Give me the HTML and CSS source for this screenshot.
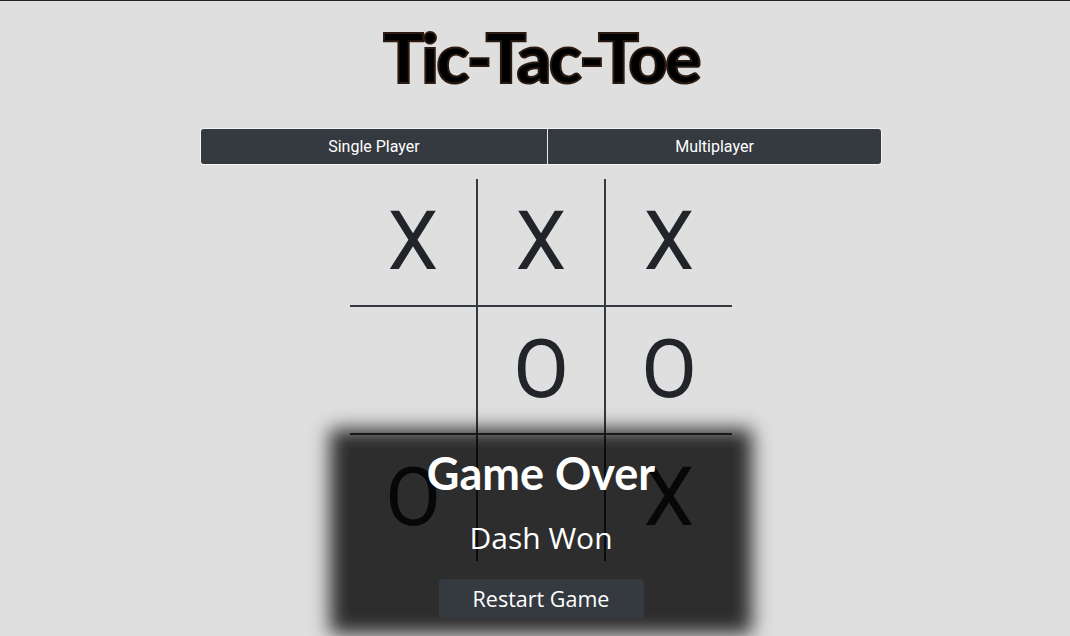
FILE: index.html
```html
<!DOCTYPE html>
<html>
<head>
<meta charset="utf-8">
<link rel="stylesheet" href="styles.css">
</head>
<body>
<div class="page">
  <h1 class="title">Tic-Tac-Toe</h1>
  <div class="modes">
    <button class="mode">Single Player</button>
    <button class="mode">Multiplayer</button>
  </div>
  <div class="board">
    <div class="cell">X</div>
    <div class="cell">X</div>
    <div class="cell">X</div>
    <div class="cell"></div>
    <div class="cell">O</div>
    <div class="cell">O</div>
    <div class="cell">O</div>
    <div class="cell"></div>
    <div class="cell">X</div>
    <div class="overlay">
      <h2 class="over-title">Game Over</h2>
      <p class="over-msg">Dash Won</p>
      <button class="restart">Restart Game</button>
    </div>
  </div>
</div>
</body>
</html>
```

FILE: styles.css
```css
html {
  border-top: 1px solid #222;
  background: #dfdfdf;
}
body {
  margin: 0;
  background: #dfdfdf;
  height: 635px;
  overflow: hidden;
}
.page {
  padding-left: 12px;
  display: flex;
  flex-direction: column;
  align-items: center;
}
.title {
  margin: 15px 0 0 0;
  font-family: "Lato", sans-serif;
  font-weight: 900;
  font-size: 68px;
  line-height: 1.2;
  color: #000;
  -webkit-text-stroke: 2px #2a1a10;
  letter-spacing: -2.5px;
}
.modes {
  margin-top: 30px;
  width: 682px;
  height: 37px;
  display: flex;
  border: 1px solid #f4f4f4;
  border-radius: 4px;
  overflow: hidden;
  box-sizing: border-box;
}
.mode {
  flex: 1 1 auto;
  margin: 0;
  border: 0;
  background: #343a40;
  color: #fff;
  font-family: "Roboto", sans-serif;
  font-size: 16px;
  padding: 0;
}
.mode + .mode {
  border-left: 1px solid #e8e8e8;
}
.board {
  position: relative;
  margin-top: 14px;
  display: grid;
  grid-template-columns: 128px 128px 126px;
  grid-template-rows: 128px 128px 126px;
}
.cell {
  display: flex;
  align-items: center;
  justify-content: center;
  font-family: "Roboto", sans-serif;
  font-size: 81px;
  font-weight: 400;
  color: #212529;
  box-sizing: border-box;
  border-color: #343a40;
  border-style: solid;
  border-width: 0;
}
.cell:nth-child(3n+1), .cell:nth-child(3n+2) {
  border-right-width: 2px;
}
.cell:nth-child(-n+6) {
  border-bottom-width: 2px;
}
.overlay {
  position: absolute;
  left: 0;
  top: 270px;
  width: 382px;
  height: 165px;
  background: rgba(0, 0, 0, 0.8);
  box-shadow: 0 0 18px 20px rgba(0, 0, 0, 0.8);
  display: flex;
  flex-direction: column;
  align-items: center;
  color: #fff;
}
.overlay > * {
  flex-shrink: 0;
}
.over-title {
  margin: -3px 0 0 0;
  font-family: "Lato", sans-serif;
  font-weight: 700;
  font-size: 45px;
  line-height: 1.2;
}
.over-msg {
  margin: 18px 0 0 0;
  font-family: "Open Sans", sans-serif;
  font-size: 30px;
  line-height: 1.36;
}
.restart {
  margin-top: 21px;
  width: 205px;
  height: 39px;
  border: 0;
  border-radius: 4px;
  background: #343a40;
  color: #fff;
  font-family: "Open Sans", sans-serif;
  font-size: 21.5px;
  padding: 0;
}
```
